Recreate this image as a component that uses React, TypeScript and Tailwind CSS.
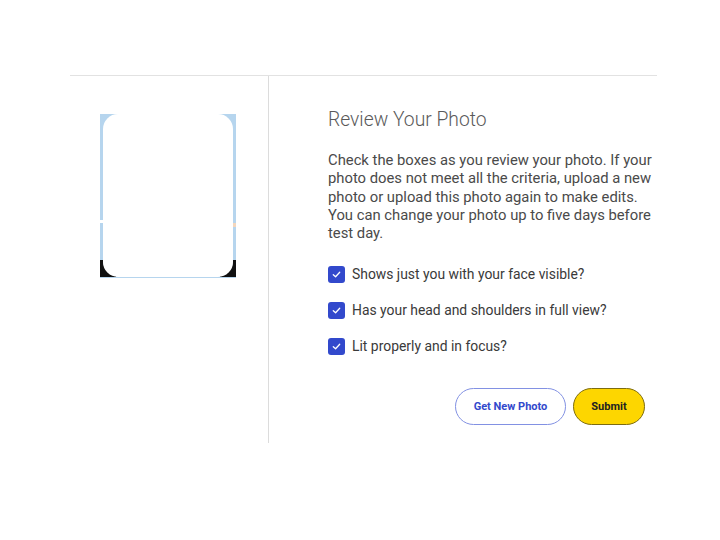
import React from "react";

function Check() {
  return (
    <span className="flex h-[17px] w-[17px] shrink-0 items-center justify-center rounded-[3px] bg-[#3249cc]">
      <svg width="11" height="11" viewBox="0 0 12 12" fill="none">
        <path d="M2.5 6.2 L5 8.5 L9.5 3.5" stroke="#fff" strokeWidth="1.4" strokeLinecap="round" strokeLinejoin="round" />
      </svg>
    </span>
  );
}

function Photo() {
  return (
    <svg width="136" height="164" viewBox="0 0 136 164">
      <rect x="0" y="0" width="136" height="164" fill="#b6d5ee" />
      <path d="M0 146 L0 163 L16 163 L16 160 Q3 158 3 146 Z" fill="#111" />
      <path d="M136 146 L136 163 L120 163 L120 160 Q133 158 133 146 Z" fill="#111" />
      <rect x="3" y="0" width="130" height="163" rx="15" ry="15" fill="#fff" />
      <rect x="0" y="106" width="3" height="3" fill="#fff" />
      <rect x="133" y="109" width="3" height="4" fill="#f3d6bd" />
    </svg>
  );
}

export default function App() {
  const items = [
    "Shows just you with your face visible?",
    "Has your head and shoulders in full view?",
    "Lit properly and in focus?",
  ];
  return (
    <div className="h-[540px] w-[720px] overflow-hidden bg-white font-['Roboto',sans-serif]">
      <div className="ml-[70px] mt-[75px] flex w-[587px] border-t border-[#e2e2e2]">
        <div className="h-[367px] w-[199px] shrink-0 border-r border-[#dcdcdc] pl-[30px] pt-[38px]">
          <Photo />
        </div>
        <div className="min-w-0 flex-1 pl-[59px] pt-[31px]">
          <h1 className="text-[19.3px] font-light leading-[26px] text-[#5a5a5a]">Review Your Photo</h1>
          <p className="mt-[18px] w-[328px] text-[14.8px] leading-[18.3px] text-[#4a4a4a]">
            Check the boxes as you review your photo. If your photo does not meet all the criteria, upload a new photo or upload this photo again to make edits. You can change your photo up to five days before test day.
          </p>
          <div className="mt-[24px] flex flex-col gap-[19px]">
            {items.map((t) => (
              <div key={t} className="flex items-center gap-[7px]">
                <Check />
                <span className="text-[13.9px] leading-[17px] text-[#3a3a3a]">{t}</span>
              </div>
            ))}
          </div>
          <div className="mt-[33px] flex justify-end gap-[7px] pr-[12px]">
            <button className="h-[37px] w-[111px] rounded-full border border-[#8291e3] bg-white text-[11px] font-bold text-[#3249cc]">
              Get New Photo
            </button>
            <button className="h-[37px] w-[72px] rounded-full border border-[#7d6c10] bg-[#fdd600] text-[11px] font-bold text-[#222]">
              Submit
            </button>
          </div>
        </div>
      </div>
    </div>
  );
}
